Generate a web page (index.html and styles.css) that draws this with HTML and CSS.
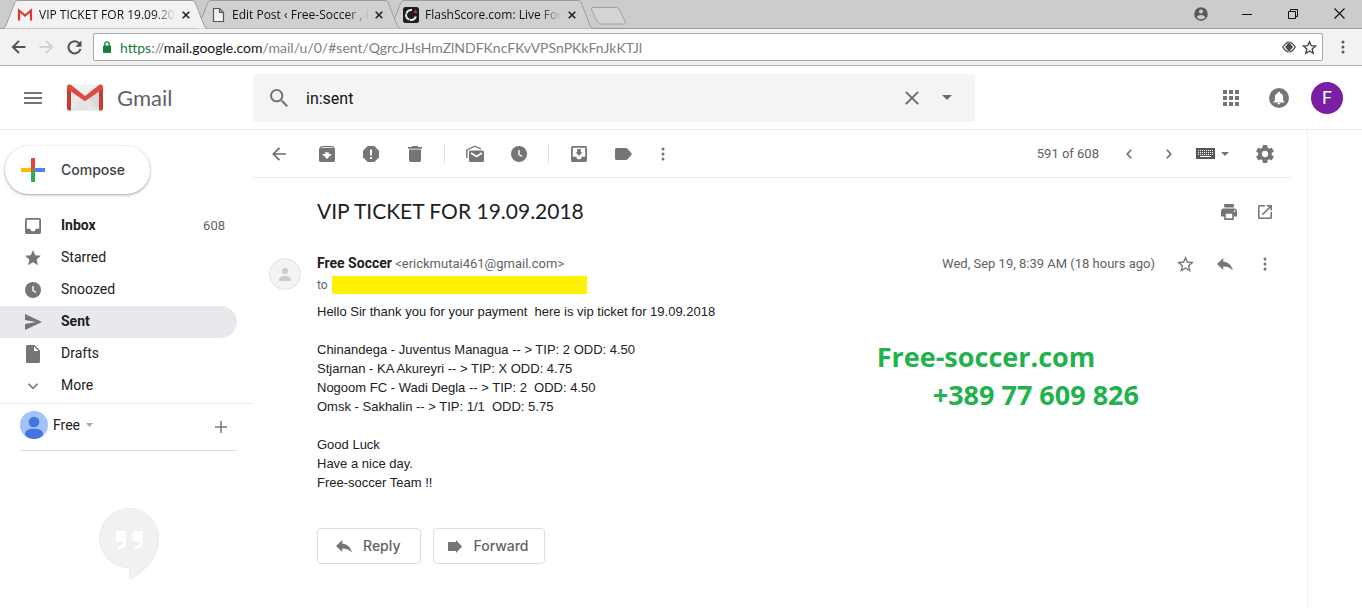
FILE: index.html
```html
<!DOCTYPE html>
<html lang="en">
<head>
<meta charset="utf-8">
<title>VIP TICKET FOR 19.09.2018</title>
<link rel="stylesheet" href="styles.css">
</head>
<body>
<header class="browser">
  <div class="tabstrip">
    <div class="tab tab-active">
      <svg class="tab-shape" viewBox="0 0 206 29"><path d="M0 28.5C3 28 3.500 26.500 4.500 24L12 4.500C13 2 14 .5 16 .5H190C192 .5 193 2 194 4.500L201.500 24C202.500 26.500 203 28 206 28.500"/></svg>
      <svg class="favicon" viewBox="0 0 16 16"><path d="M2.500 3.500h11v10h-11z" fill="#f3f3f3"/><path d="M2 13.500V3.500l6 5 6-5v10" fill="none" stroke="#d93a2f" stroke-width="2.200"/></svg>
      <span class="tab-title">VIP TICKET FOR 19.09.201</span>
      <button class="tab-close" aria-label="Close tab"><svg viewBox="0 0 8 8"><path d="M.7.7l6.600 6.600M7.300.7L.7 7.300"/></svg></button>
    </div>
    <div class="tab tab-second">
      <svg class="tab-shape" viewBox="0 0 206 29"><path d="M0 28.5C3 28 3.500 26.500 4.500 24L12 4.500C13 2 14 .5 16 .5H190C192 .5 193 2 194 4.500L201.500 24C202.500 26.500 203 28 206 28.500"/></svg>
      <svg class="favicon" viewBox="0 0 16 16"><path d="M3.500 1.500h6l4 4v9h-10zM9.500 1.500v4h4" fill="#f2f2f2" stroke="#555" stroke-width="1.200"/></svg>
      <span class="tab-title">Edit Post ‹ Free-Soccer , F</span>
      <button class="tab-close" aria-label="Close tab"><svg viewBox="0 0 8 8"><path d="M.7.7l6.600 6.600M7.300.7L.7 7.300"/></svg></button>
    </div>
    <div class="tab">
      <svg class="tab-shape" viewBox="0 0 206 29"><path d="M0 28.5C3 28 3.500 26.500 4.500 24L12 4.500C13 2 14 .5 16 .5H190C192 .5 193 2 194 4.500L201.500 24C202.500 26.500 203 28 206 28.500"/></svg>
      <svg class="favicon" viewBox="0 0 16 16"><rect width="16" height="16" rx="2.500" fill="#1d1d1d"/><path d="M9 3A5 5 0 1 0 13 9" fill="none" stroke="#e8e8e8" stroke-width="2" stroke-dasharray="7 .5"/><path d="M10.500 6l1.800-3.800L14.500 6z" fill="#e32a22"/></svg>
      <span class="tab-title">FlashScore.com: Live Foot</span>
      <button class="tab-close" aria-label="Close tab"><svg viewBox="0 0 8 8"><path d="M.7.7l6.600 6.600M7.300.7L.7 7.300"/></svg></button>
    </div>
    <button class="new-tab" aria-label="New tab"><svg viewBox="0 0 36 18"><path d="M4 .5h22c2 0 3 1 4 3l5 11c.6 1.700 0 2.500-1.500 2.500H11c-2 0-3-1-4-3L1.500 3C1 1.500 2 .5 4 .5z" fill="#d4d4d4" stroke="#a0a0a0"/></svg></button>
    <div class="window-controls">
      <button aria-label="Profile"><svg width="14" height="14" viewBox="0 0 14 14"><circle cx="7" cy="7" r="6.800" fill="#5a5a5a"/><circle cx="7" cy="4.500" r="2" fill="#ccc"/><path d="M2.800 10.200C3.600 8.700 5 8 7 8s3.400.7 4.200 2.200A5 5 0 0 1 7 12.300a5 5 0 0 1-4.200-2.100z" fill="#ccc"/></svg></button>
      <button aria-label="Minimize"><svg width="10" height="10" viewBox="0 0 10 10"><path d="M0 5.500h10" stroke="#111"/></svg></button>
      <button aria-label="Restore"><svg width="10" height="10" viewBox="0 0 10 10"><path d="M.5 2.500h7v7h-7zM2.500 2.500v-2h7v7h-2" fill="none" stroke="#111"/></svg></button>
      <button aria-label="Close"><svg width="11" height="11" viewBox="0 0 11 11"><path d="M.5.5l10 10M10.500.5l-10 10" stroke="#111" stroke-width="1.200"/></svg></button>
    </div>
  </div>
  <div class="navbar">
    <button aria-label="Back"><svg width="15" height="14" viewBox="0 0 15 14"><path d="M14.500 7H2M8 .9L1.900 7 8 13.100" fill="none" stroke="#505357" stroke-width="2"/></svg></button>
    <button aria-label="Forward"><svg width="15" height="14" viewBox="0 0 15 14"><path d="M.5 7H13M7 .9L13.100 7 7 13.100" fill="none" stroke="#d2d2d2" stroke-width="2"/></svg></button>
    <button aria-label="Reload"><svg width="15" height="15" viewBox="0 0 15 15"><path d="M12.400 3.500A6.100 6.100 0 1 0 13.500 9" fill="none" stroke="#505357" stroke-width="2"/><path d="M14.500.5v6.200H8.300z" fill="#505357"/></svg></button>
    <div class="omnibox">
      <svg width="8" height="12" viewBox="0 0 8 12"><path d="M1.800 5V3a2.200 2.200 0 0 1 4.400 0v2" fill="none" stroke="#188038" stroke-width="1.300"/><rect y="4.500" width="8" height="7.500" rx=".8" fill="#188038"/></svg>
      <div class="url"><span class="url-scheme">https</span>://<span class="url-host">mail.google.com</span>/mail/u/0/#sent/QgrcJHsHmZlNDFKncFKvVPSnPKkFnJkKTJl</div>
      <button aria-label="Site access"><svg width="14" height="12" viewBox="0 0 14 12"><path d="M6.500.8C4 1.800 2 3.500.8 6c1.200 2.500 3.200 4.200 5.700 5.200M7.500.8c2.500 1 4.500 2.700 5.700 5.200-1.200 2.500-3.200 4.200-5.700 5.200" fill="none" stroke="#4a4a4a" stroke-width="1.300"/><path d="M7 1.300L11 6 7 10.700 3 6z" fill="#4a4a4a"/></svg></button>
      <button aria-label="Bookmark"><svg width="15" height="15" viewBox="0 0 15 15"><path d="M7.500 1.700l1.700 4 4.300.4-3.300 2.900 1 4.300-3.700-2.300-3.700 2.300 1-4.300L1.500 6.100l4.300-.4z" fill="none" stroke="#484848" stroke-width="1.400"/></svg></button>
    </div>
    <button class="browser-menu" aria-label="Browser menu"><svg width="4" height="14" viewBox="0 0 4 14" fill="#5a5a5a"><circle cx="2" cy="2" r="1.500"/><circle cx="2" cy="7" r="1.500"/><circle cx="2" cy="12" r="1.500"/></svg></button>
  </div>
</header>

<header class="appbar">
  <div class="brand">
    <button aria-label="Main menu"><svg width="18" height="12" viewBox="0 0 18 12"><path d="M0 1h18M0 6h18M0 11h18" stroke="#757575" stroke-width="2"/></svg></button>
    <svg class="logo" width="36" height="27" viewBox="0 0 36 27"><path d="M2 .5h32v26H2z" fill="#f1f1f1"/><path d="M4 26.500L14.500 14 18 17l3.500-3L32 26.500z" fill="#e4e4e4"/><path d="M4 8v18.500L14.500 14z" fill="#e9e9e9"/><path d="M32 8v18.500L21.500 14z" fill="#d9d9d9"/><path d="M0 3v21.500a2 2 0 0 0 2 2h2V7zM36 3v21.500a2 2 0 0 1-2 2h-2V7z" fill="#c93c31"/><path d="M0 3C0 .6 2.500 0 4 1l14 11L32 1c1.500-1 4-.4 4 2 0 1.200-.6 2-1.500 2.700L18 17.200 1.500 5.700C.6 5 0 4.200 0 3z" fill="#dd4b3e"/></svg>
    <span class="wordmark">Gmail</span>
  </div>
  <form class="search" role="search">
    <button type="button" aria-label="Search mail"><svg width="18" height="18" viewBox="3 3 17.500 17.500" fill="#757575"><path d="M15.500 14h-.79l-.28-.27A6.470 6.470 0 0 0 16 9.500 6.500 6.500 0 1 0 9.500 16c1.610 0 3.090-.59 4.230-1.570l.27.28v.79l5 4.990L20.490 19l-4.990-5zm-6 0C7.010 14 5 11.990 5 9.500S7.010 5 9.500 5 14 7.010 14 9.500 11.990 14 9.500 14z"/></svg></button>
    <input type="text" value="in:sent" aria-label="Search mail">
    <button type="button" aria-label="Clear search"><svg width="14" height="14" viewBox="0 0 14 14"><path d="M.8.8l12.400 12.400M13.200.8L.8 13.200" stroke="#6a6a6a" stroke-width="1.900"/></svg></button>
    <button type="button" aria-label="Search options"><svg width="10" height="5" viewBox="0 0 10 5"><path d="M0 0h10L5 5z" fill="#6a6a6a"/></svg></button>
  </form>
  <div class="account">
    <button aria-label="Google apps"><svg width="16" height="16" viewBox="0 0 16 16" fill="#757575"><path d="M0 0h4v4H0zM6 0h4v4H6zM12 0h4v4h-4zM0 6h4v4H0zM6 6h4v4H6zM12 6h4v4h-4zM0 12h4v4H0zM6 12h4v4H6zM12 12h4v4h-4z"/></svg></button>
    <button aria-label="Notifications"><svg width="20" height="20" viewBox="0 0 20 20"><circle cx="10" cy="10" r="10" fill="#757575"/><path d="M10 3.800c.7 0 1.100.4 1.100 1.100 2 .6 3 2.200 3 4.100v3.400l1.400 1.400v.6h-11v-.6l1.400-1.400V9c0-1.900 1-3.500 3-4.100 0-.7.400-1.100 1.100-1.100zM8.600 15h2.800a1.400 1.400 0 0 1-2.800 0z" fill="#fff"/></svg></button>
    <button class="profile" aria-label="Account">F</button>
  </div>
</header>

<div class="layout">
  <aside class="sidebar">
    <button class="compose"><svg width="24" height="24" viewBox="0 0 24 24"><path d="M10 0h4v10l-4 4z" fill="#ea4335"/><path d="M0 10h11l1 2-2 2H0z" fill="#fbbc05"/><path d="M10 14l4-4v14h-4z" fill="#34a853"/><path d="M14 10h10v4H14z" fill="#4285f4"/><path d="M10 10h4v0l-4 4z" fill="#ea4335"/></svg><span>Compose</span></button>
    <nav class="folders">
      <a href="#inbox" class="folder folder-strong"><svg width="16" height="16" viewBox="3 3 18 18"><path d="M19 3H5a2 2 0 0 0-2 2v14c0 1.100.9 2 2 2h14a2 2 0 0 0 2-2V5a2 2 0 0 0-2-2zm0 12h-4c0 1.660-1.350 3-3 3s-3-1.340-3-3H5V5h14v10z"/></svg><span>Inbox</span><span class="count">608</span></a>
      <a href="#starred" class="folder"><svg width="16" height="16" viewBox="2 2 20 20"><path d="M12 17.270L18.180 21l-1.640-7.030L22 9.240l-7.190-.61L12 2 9.190 8.630 2 9.240l5.460 4.730L5.820 21z"/></svg><span>Starred</span></a>
      <a href="#snoozed" class="folder"><svg width="16" height="16" viewBox="0 0 16 16"><circle cx="8" cy="8" r="8"/><path d="M8 4v4.500l3.300 2" fill="none" stroke="#fff" stroke-width="1.400"/></svg><span>Snoozed</span></a>
      <a href="#sent" class="folder folder-strong folder-current"><svg width="17" height="16" viewBox="0 0 17 16"><path d="M0 0l17 8L0 16V10l11-2L0 6z"/></svg><span>Sent</span></a>
      <a href="#drafts" class="folder"><svg width="16" height="18" viewBox="0 0 16 18"><path d="M2.500 0H9.500L15 5.500v11A1.500 1.500 0 0 1 13.500 18h-11A1.500 1.500 0 0 1 1 16.500v-15A1.500 1.500 0 0 1 2.500 0z"/><path d="M9 1.500V6h4.500z" fill="#fff"/></svg><span>Drafts</span></a>
      <a href="#more" class="folder"><svg width="16" height="16" viewBox="0 0 16 16"><path d="M3.500 5.800L8 10.300l4.500-4.500" fill="none" stroke="#757575" stroke-width="1.600"/></svg><span>More</span></a>
    </nav>
    <section class="chat">
      <div class="chat-user">
        <svg width="28" height="28" viewBox="0 0 28 28"><circle cx="14" cy="14" r="14" fill="#a1c2fa"/><circle cx="14" cy="11" r="5.300" fill="#4275e0"/><path d="M5 23c0-3.500 4-5.200 9-5.200s9 1.700 9 5.200c0 2-4 5-9 5s-9-3-9-5z" fill="#4275e0"/></svg>
        <button class="chat-name">Free<svg width="7" height="4" viewBox="0 0 7 4"><path d="M0 0h7L3.500 4z" fill="#aaa"/></svg></button>
        <button class="chat-add" aria-label="New conversation"><svg width="12" height="12" viewBox="0 0 12 12"><path d="M6 0v12M0 6h12" stroke="#757575" stroke-width="1.500"/></svg></button>
      </div>
      <svg class="hangouts" width="60" height="72" viewBox="0 0 60 72"><path d="M30 .5a29.500 29.500 0 1 0 .5 59.400v11.300C46 64 59.500 49 59.500 30A29.500 29.500 0 0 0 30 .5z" fill="#f1f1f1" stroke="#ebebeb"/><path d="M18.500 22.500h6.500a2.500 2.500 0 0 1 2.500 2.500v8c0 5-2.500 8.500-8 8.500-1.500 0-2-2.500-.2-3.200 2.500-.8 4-1.800 4.200-4.300h-5a2.500 2.500 0 0 1-2.500-2.500V25a2.500 2.500 0 0 1 2.500-2.500zM35.500 22.500H42a2.500 2.500 0 0 1 2.500 2.500v8c0 5-2.500 8.500-8 8.500-1.500 0-2-2.500-.2-3.200 2.500-.8 4-1.800 4.200-4.300h-5a2.500 2.500 0 0 1-2.500-2.500V25a2.500 2.500 0 0 1 2.500-2.500z" fill="#fff" stroke="#ebebeb" stroke-width=".6"/></svg>
    </section>
  </aside>

  <main class="mail">
    <div class="toolbar">
      <div class="tools tools-back"><button aria-label="Back to Sent"><svg width="14" height="14" viewBox="0 0 14 14"><path d="M14 7H1.500M7.500.8L1.300 7l6.200 6.200" fill="none" stroke="#6b6b6b" stroke-width="1.700"/></svg></button></div>
      <div class="tools">
        <button aria-label="Archive"><svg width="16" height="16" viewBox="3 3 18 18"><path d="M20.540 5.230l-1.390-1.680C18.880 3.210 18.470 3 18 3H6c-.47 0-.88.21-1.160.55L3.460 5.230C3.170 5.570 3 6.020 3 6.500V19c0 1.100.9 2 2 2h14c1.100 0 2-.9 2-2V6.500c0-.48-.17-.93-.46-1.270zM12 17.500L6.500 12H10v-2h4v2h3.500L12 17.500zM5.120 5l.81-1h12l.94 1H5.120z"/></svg></button>
        <button aria-label="Report spam"><svg width="16" height="16" viewBox="0 0 16 16"><path d="M4.700 0h6.600L16 4.700v6.600L11.300 16H4.700L0 11.300V4.700z"/><path d="M7 3.500h2v6H7zM7 11h2v2H7z" fill="#fff"/></svg></button>
        <button aria-label="Delete"><svg width="14" height="16" viewBox="5 3 14 18" preserveAspectRatio="none"><path d="M6 19c0 1.100.9 2 2 2h8c1.100 0 2-.9 2-2V7H6v12zM19 4h-3.500l-1-1h-5l-1 1H5v2h14V4z"/></svg></button>
      </div>
      <span class="divider"></span>
      <div class="tools">
        <button aria-label="Mark as unread"><svg width="18" height="17" viewBox="0 0 18 17"><path d="M.8 13V5.200L8.500 1.200l6.500 2.600" fill="none" stroke="#757575" stroke-width="1.400"/><rect x="3" y="5.500" width="15" height="11.500" rx="1.500"/><path d="M5 8l5.500 3.500L16 8" fill="none" stroke="#fff" stroke-width="1.600"/></svg></button>
        <button aria-label="Snooze"><svg width="16" height="16" viewBox="0 0 16 16"><circle cx="8" cy="8" r="8"/><path d="M8 4v4.500l3.300 2" fill="none" stroke="#fff" stroke-width="1.400"/></svg></button>
      </div>
      <span class="divider"></span>
      <div class="tools tools-last">
        <button aria-label="Move to"><svg width="16" height="16" viewBox="3 3 18 18"><path d="M19 3H5a2 2 0 0 0-2 2v14c0 1.100.9 2 2 2h14a2 2 0 0 0 2-2V5a2 2 0 0 0-2-2zm0 12h-4c0 1.660-1.350 3-3 3s-3-1.340-3-3H5V5h14v10zM16 10h-2V6.500h-4V10H8l4 4z"/></svg></button>
        <button aria-label="Labels"><svg width="17" height="12" viewBox="0 0 17 12"><path d="M1.500 0H11c.7 0 1.200.2 1.600.7L17 6l-4.400 5.300c-.4.5-.9.7-1.600.7H1.500A1.500 1.500 0 0 1 0 10.500v-9A1.500 1.500 0 0 1 1.500 0z"/></svg></button>
      </div>
      <div class="tools"><button aria-label="More"><svg width="4" height="14" viewBox="0 0 4 14"><circle cx="2" cy="2" r="1.500"/><circle cx="2" cy="7" r="1.500"/><circle cx="2" cy="12" r="1.500"/></svg></button></div>
      <div class="pager">
        <span>591 of 608</span>
        <button aria-label="Newer"><svg width="6" height="10" viewBox="0 0 6 10"><path d="M5.200.7L1.200 5l4 4.300" fill="none" stroke="#6b6b6b" stroke-width="1.600"/></svg></button>
        <button aria-label="Older"><svg width="6" height="10" viewBox="0 0 6 10"><path d="M.8.7l4 4.300-4 4.300" fill="none" stroke="#6b6b6b" stroke-width="1.600"/></svg></button>
      </div>
      <button class="keyboard" aria-label="Input tools"><svg width="19" height="11" viewBox="0 0 19 11"><path d="M0 0h19v11H0z" fill="#555"/><path d="M2 2.500h15.500M2 4.500h15.500M2 6.500h15.500" stroke="#fff" stroke-dasharray="1 1"/><path d="M4 8.500h11" stroke="#fff"/></svg><svg width="8" height="4" viewBox="0 0 8 4"><path d="M0 0h8L4 4z"/></svg></button>
      <div class="tools"><button aria-label="Settings"><svg width="18" height="18" viewBox="2 2 20 20"><path d="M19.430 12.980c.04-.32.07-.64.07-.98s-.03-.66-.07-.98l2.110-1.650a.5.500 0 0 0 .12-.64l-2-3.460a.5.500 0 0 0-.61-.22l-2.490 1a7.300 7.300 0 0 0-1.690-.98l-.38-2.650A.49.490 0 0 0 14 2h-4a.49.490 0 0 0-.49.420l-.38 2.650c-.61.25-1.170.59-1.690.98l-2.490-1a.49.490 0 0 0-.61.220l-2 3.460a.5.500 0 0 0 .12.640l2.110 1.650c-.04.32-.07.65-.07.98s.03.66.07.98l-2.110 1.650a.5.500 0 0 0-.12.640l2 3.460c.12.22.39.3.61.22l2.490-1c.52.4 1.080.73 1.690.98l.38 2.650c.03.24.24.42.49.42h4c.25 0 .46-.18.49-.42l.38-2.650c.61-.25 1.170-.59 1.690-.98l2.490 1c.23.09.49 0 .61-.22l2-3.460a.5.500 0 0 0-.12-.64zM12 15.500a3.500 3.500 0 1 1 0-7 3.500 3.500 0 0 1 0 7z"/></svg></button></div>
    </div>

    <div class="subject-row">
      <h1>VIP TICKET FOR 19.09.2018</h1>
      <div class="row-actions row-actions-tight">
        <button aria-label="Print"><svg width="16" height="16" viewBox="2 3 20 18" preserveAspectRatio="none"><path d="M19 8H5c-1.660 0-3 1.340-3 3v6h4v4h12v-4h4v-6c0-1.660-1.340-3-3-3zm-3 11H8v-5h8v5zm3-7a1 1 0 1 1 0-2 1 1 0 0 1 0 2zm-1-9H6v4h12V3z"/></svg></button>
        <button aria-label="Open in new window"><svg width="14" height="14" viewBox="3 3 18 18"><path d="M19 19H5V5h7V3H5a2 2 0 0 0-2 2v14a2 2 0 0 0 2 2h14c1.100 0 2-.9 2-2v-7h-2v7zM14 3v2h3.590l-9.830 9.830 1.410 1.410L19 6.410V10h2V3h-7z"/></svg></button>
      </div>
    </div>

    <article class="message">
      <svg class="avatar" width="32" height="32" viewBox="0 0 32 32"><circle cx="16" cy="16" r="15.500" fill="#f3f3f3" stroke="#e2e2e2"/><circle cx="16" cy="13" r="3" fill="#ccc"/><path d="M10 23v-1.500c0-2.200 3-3.500 6-3.500s6 1.300 6 3.500V23z" fill="#ccc"/></svg>
      <div class="message-main">
        <div class="message-head">
          <div class="from"><strong>Free Soccer</strong> <span class="address">&lt;erickmutai461@gmail.com&gt;</span></div>
          <time>Wed, Sep 19, 8:39 AM (18 hours ago)</time>
          <div class="row-actions">
            <button aria-label="Star"><svg width="17" height="16" viewBox="2 2 20 19"><path d="M22 9.240l-7.190-.62L12 2 9.190 8.630 2 9.240l5.460 4.730L5.820 21 12 17.270 18.180 21l-1.630-7.030zM12 15.400l-3.760 2.270 1-4.280-3.320-2.880 4.380-.38L12 6.100l1.710 4.040 4.380.38-3.320 2.880 1 4.280z"/></svg></button>
            <button aria-label="Reply"><svg width="16" height="12" viewBox="3 5 18 14" preserveAspectRatio="none"><path d="M10 9V5l-7 7 7 7v-4.100c5 0 8.500 1.600 11 5.100-1-5-4-10-11-11z"/></svg></button>
            <button aria-label="More"><svg width="4" height="14" viewBox="0 0 4 14"><circle cx="2" cy="2" r="1.500"/><circle cx="2" cy="7" r="1.500"/><circle cx="2" cy="12" r="1.500"/></svg></button>
          </div>
        </div>
        <div class="to">to <span class="redacted"></span></div>
        <div class="content">
          <div class="body-text">Hello Sir thank you for your payment  here is vip ticket for 19.09.2018

Chinandega - Juventus Managua -- &gt; TIP: 2 ODD: 4.50
Stjarnan - KA Akureyri -- &gt; TIP: X ODD: 4.75
Nogoom FC - Wadi Degla -- &gt; TIP: 2  ODD: 4.50
Omsk - Sakhalin -- &gt; TIP: 1/1  ODD: 5.75

Good Luck
Have a nice day.
Free-soccer Team !!</div>
          <div class="stamp"><div>Free-soccer.com</div><div class="stamp-phone">+389 77 609 826</div></div>
        </div>
        <div class="replies">
          <button class="reply"><svg width="16" height="12" viewBox="3 5 18 14" preserveAspectRatio="none"><path d="M10 9V5l-7 7 7 7v-4.100c5 0 8.500 1.600 11 5.100-1-5-4-10-11-11z"/></svg><span>Reply</span></button>
          <button class="forward"><svg width="14" height="13" viewBox="0 0 14 13"><path d="M0 2h8V0l6 6.500L8 13v-2H0z"/></svg><span>Forward</span></button>
        </div>
      </div>
    </article>
  </main>
  <aside class="side-panel"></aside>
</div>
</body>
</html>
```

FILE: styles.css
```css
* { box-sizing: border-box; }
html, body { height: 100%; }
body {
  margin: 0;
  display: flex;
  flex-direction: column;
  overflow: hidden;
  background: #fff;
  color: #202124;
  font-family: Roboto, "Liberation Sans", sans-serif;
  font-size: 14px;
}
button {
  display: flex;
  align-items: center;
  justify-content: center;
  margin: 0;
  padding: 0;
  border: 0;
  background: none;
  color: inherit;
  font: inherit;
}
svg { display: block; flex: none; }
a { color: inherit; text-decoration: none; }

/* Browser frame */
.browser { color: #111; }
.tabstrip {
  display: flex;
  height: 29px;
  padding-left: 2px;
  background: #ccc;
  box-shadow: inset 0 -1px #9c9c9c;
}
.tab {
  position: relative;
  display: flex;
  align-items: center;
  flex: 0 1 206px;
  min-width: 0;
  padding: 0 18px 0 15px;
  font-family: "Open Sans", "Noto Sans", sans-serif;
  font-size: 12px;
}
.tab + .tab { margin-left: -13px; }
.tab-active { z-index: 2; }
.tab-second { z-index: 1; }
.tab-shape {
  position: absolute;
  inset: 0;
  width: 100%;
  height: 29px;
  fill: #d0d0d0;
  stroke: #9c9c9c;
}
.tab-active .tab-shape { fill: #f2f2f2; }
.favicon { position: relative; width: 16px; height: 16px; }
.tab-title {
  position: relative;
  flex: 1;
  min-width: 0;
  margin: 0 0 0 6px;
  overflow: hidden;
  white-space: nowrap;
  -webkit-mask-image: linear-gradient(to right, #000 80%, transparent 96%);
  mask-image: linear-gradient(to right, #000 80%, transparent 96%);
}
.tab-close { position: relative; width: 8px; height: 16px; }
.tab-close svg { width: 8px; height: 8px; stroke: #222; stroke-width: 1.600; }
.new-tab { width: 36px; height: 29px; margin-left: -4px; padding-top: 2px; }
.new-tab svg { width: 36px; height: 18px; }
.window-controls { display: flex; margin-left: auto; height: 27px; }
.window-controls button { width: 46px; }
.navbar {
  display: flex;
  align-items: center;
  height: 37px;
  padding-left: 4px;
  background: #f2f2f2;
  border-bottom: 1px solid #b6b6b6;
}
.navbar > button { width: 28px; height: 28px; }
.omnibox {
  display: flex;
  align-items: center;
  flex: 1;
  height: 28px;
  margin-left: 5px;
  padding: 0 5px 0 9px;
  background: #fff;
  border: 1px solid #a8a8a8;
  border-radius: 2px;
}
.url { flex: 1; min-width: 0; margin-left: 9px; overflow: hidden; white-space: nowrap; font-family: Lato, sans-serif; font-size: 14px; color: #808080; }
.url-scheme { color: #188038; }
.url-host { color: #111; }
.omnibox button { width: 25px; height: 24px; }
.omnibox button:last-child { width: 16px; }
.navbar > .browser-menu { width: 39px; }

/* Gmail header */
.appbar {
  display: flex;
  align-items: center;
  flex: none;
  height: 64px;
  border-bottom: 1px solid #ebebeb;
}
.brand { display: flex; align-items: center; flex: 0 0 253px; }
.brand button { width: 20px; height: 40px; margin-left: 23px; }
.logo { margin-left: 24px; }
.wordmark { margin-left: 14px; font-family: Lato, sans-serif; font-size: 22px; color: #5f6368; }
.search {
  display: flex;
  align-items: center;
  flex: 0 1 722px;
  height: 48px;
  padding: 0 14px 0 12px;
  background: #f4f4f4;
  border-radius: 4px;
}
.search button { width: 28px; height: 40px; }
.search button + button { margin-left: 7px; }
.search input {
  flex: 1;
  min-width: 0;
  padding: 2px 0 0;
  margin-left: 13px;
  border: 0;
  outline: 0;
  background: none;
  color: #111;
  font: 16px Roboto, sans-serif;
}
.account { display: flex; align-items: center; gap: 16px; margin-left: auto; padding-right: 19px; }
.account button { width: 32px; height: 32px; }
.account .profile { border-radius: 50%; background: #7b1fa2; color: #fff; font-size: 18px; }

/* Columns */
.layout { display: flex; flex: 1; min-height: 0; }
.sidebar { flex: 0 0 253px; }
.mail { flex: 1; min-width: 0; }
.side-panel { flex: 0 0 55px; border-left: 1px solid #f0f0f0; }

/* Sidebar */
.compose {
  height: 48px;
  margin: 16px 0 0 5px;
  padding: 0 25px 0 16px;
  gap: 16px;
  border-radius: 24px;
  box-shadow: 0 1px 2px rgba(60, 64, 67, .3), 0 1px 3px 1px rgba(60, 64, 67, .15);
  color: #3c4043;
  font: 500 14px Inter, sans-serif;
}
.compose span, .folder span, .replies span { padding-bottom: 2px; }
.folders { margin-top: 16px; padding-bottom: 1px; border-bottom: 1px solid #ebebeb; }
.folder {
  display: flex;
  align-items: center;
  height: 32px;
  margin-right: 16px;
  padding: 0 12px 0 25px;
  border-radius: 0 16px 16px 0;
}
.folder svg { margin-right: 20px; fill: #757575; }
.folder-strong { font-weight: 700; }
.folder-current { background: #e8e9ed; }
.folder-current svg { margin-right: 19px; }
.count { margin-left: auto; font-size: 13px; font-weight: 400; color: #5f6368; }
.chat { padding: 0 16px 0 20px; }
.chat-user { display: flex; align-items: center; height: 47px; padding-bottom: 4px; border-bottom: 1px solid #ddd; }
.chat-name { margin-left: 5px; gap: 6px; }
.chat-add { width: 32px; height: 32px; margin-left: auto; padding-top: 4px; }
.hangouts { margin: 57px auto 0 79px; }

/* Mail toolbar */
.toolbar {
  display: flex;
  align-items: center;
  height: 48px;
  margin-right: 16px;
  padding: 0 16px;
  border-bottom: 1px solid #ebebeb;
  color: #5f6368;
  font-size: 13px;
}
.mail button svg { fill: #757575; }
.tools { display: flex; gap: 24px; }
.tools button, .pager button { width: 20px; height: 20px; }
.tools-back { margin-right: 28px; }
.tools-last { margin-right: 20px; }
.divider { width: 1px; height: 20px; margin: 0 20px 0 19px; background: #e4e4e4; }
.pager { display: flex; align-items: center; gap: 20px; margin-left: auto; }
.keyboard { gap: 6px; margin: 0 26px 0 17px; }

/* Subject */
.subject-row { display: flex; align-items: center; margin: 16px 32px 0 64px; height: 36px; }
h1 { flex: 1; margin: 0; padding-bottom: 3px; font: 400 21px Lato, sans-serif; }
.row-actions { display: flex; gap: 20px; }
.row-actions-tight { gap: 16px; }
.row-actions button { width: 20px; height: 20px; }

/* Message */
.message { display: flex; margin: 24px 32px 0 16px; }
.avatar { margin: 4px 16px 0 0; }
.message-main { flex: 1; min-width: 0; }
.message-head { display: flex; align-items: center; height: 20px; color: #5f6368; font-size: 13px; }
.from, .message-head time { padding-bottom: 2px; }
.from { flex: 1; }
.from strong { font-size: 14px; color: #202124; }
.message-head time { margin-right: 20px; }
.to { display: flex; align-items: center; height: 22px; gap: 4px; color: #5f6368; font-size: 12px; }
.redacted { width: 255px; height: 18px; background: #fff200; }
.content { display: flex; justify-content: space-between; margin-top: 6px; }
.body-text { font: 13px/19px "Liberation Sans", Arial, sans-serif; white-space: pre-wrap; }
.stamp { margin: 36px 136px 0 0; color: #22b14c; font: 700 27px/38px "Open Sans", sans-serif; }
.stamp-phone { padding-left: 56px; }
.replies { display: flex; gap: 12px; margin-top: 36px; color: #5f6368; }
.replies button {
  height: 36px;
  border: 1px solid #dadce0;
  border-radius: 4px;
  font: 500 14px Inter, sans-serif;
}
.reply { padding: 0 20px 0 18px; gap: 11px; }
.forward { padding: 0 15px 0 14px; gap: 11px; }
```
